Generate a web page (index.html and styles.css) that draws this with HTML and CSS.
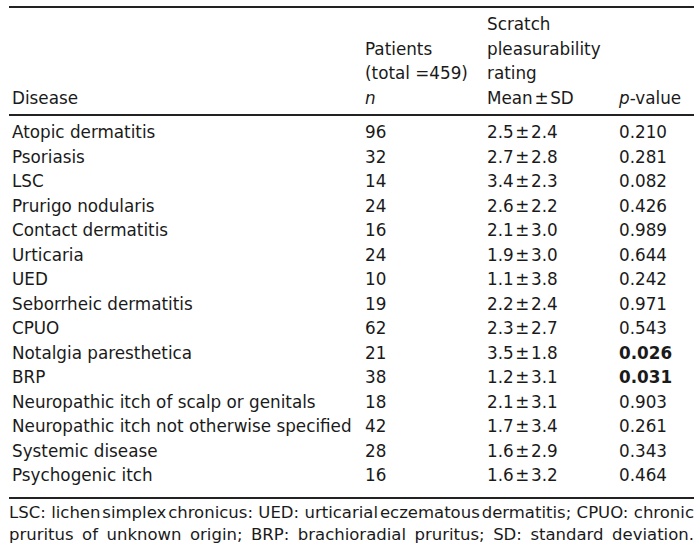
FILE: index.html
```html
<!DOCTYPE html>
<html>
<head>
<meta charset="utf-8">
<link rel="stylesheet" href="styles.css">
</head>
<body>
<div class="wrap">
<table class="tbl">
<colgroup>
<col class="c1"><col class="c2"><col class="c3"><col class="c4">
</colgroup>
<thead>
<tr>
<th>Disease</th>
<th>Patients<br>(total =459)<br><i>n</i></th>
<th>Scratch<br>pleasurability<br>rating<br>Mean&#8202;±&#8202;SD</th>
<th><i>p</i>-value</th>
</tr>
</thead>
<tbody>
<tr class="first"><td>Atopic dermatitis</td><td>96</td><td>2.5&#8202;±&#8202;2.4</td><td>0.210</td></tr>
<tr><td>Psoriasis</td><td>32</td><td>2.7&#8202;±&#8202;2.8</td><td>0.281</td></tr>
<tr><td>LSC</td><td>14</td><td>3.4&#8202;±&#8202;2.3</td><td>0.082</td></tr>
<tr><td>Prurigo nodularis</td><td>24</td><td>2.6&#8202;±&#8202;2.2</td><td>0.426</td></tr>
<tr><td>Contact dermatitis</td><td>16</td><td>2.1&#8202;±&#8202;3.0</td><td>0.989</td></tr>
<tr><td>Urticaria</td><td>24</td><td>1.9&#8202;±&#8202;3.0</td><td>0.644</td></tr>
<tr><td>UED</td><td>10</td><td>1.1&#8202;±&#8202;3.8</td><td>0.242</td></tr>
<tr><td>Seborrheic dermatitis</td><td>19</td><td>2.2&#8202;±&#8202;2.4</td><td>0.971</td></tr>
<tr><td>CPUO</td><td>62</td><td>2.3&#8202;±&#8202;2.7</td><td>0.543</td></tr>
<tr><td>Notalgia paresthetica</td><td>21</td><td>3.5&#8202;±&#8202;1.8</td><td><b>0.026</b></td></tr>
<tr><td>BRP</td><td>38</td><td>1.2&#8202;±&#8202;3.1</td><td><b>0.031</b></td></tr>
<tr><td>Neuropathic itch of scalp or genitals</td><td>18</td><td>2.1&#8202;±&#8202;3.1</td><td>0.903</td></tr>
<tr><td>Neuropathic itch not otherwise specified</td><td>42</td><td>1.7&#8202;±&#8202;3.4</td><td>0.261</td></tr>
<tr><td>Systemic disease</td><td>28</td><td>1.6&#8202;±&#8202;2.9</td><td>0.343</td></tr>
<tr class="last"><td>Psychogenic itch</td><td>16</td><td>1.6&#8202;±&#8202;3.2</td><td>0.464</td></tr>
</tbody>
</table>
<div class="foot">
<div class="fl fl1">LSC: <span class="tight">lichen simplex chronicus</span>: UED: <span class="tight">urticarial eczematous dermatitis</span>; CPUO: chronic</div>
<div class="fl fl2">pruritus of unknown origin; BRP: brachioradial pruritus; SD: standard deviation.</div>
</div>
</div>
</body>
</html>
```
FILE: styles.css
```css
html, body {
  margin: 0;
  padding: 0;
  background: #fff;
}
body {
  font-family: "DejaVu Sans", Verdana, sans-serif;
  color: #1a1a1a;
  font-size: 16.8px;
}
.wrap {
  width: 685px;
  margin-left: 9px;
  padding-top: 6px;
}
.tbl {
  width: 685px;
  border-collapse: collapse;
  table-layout: fixed;
  border-top: 2px solid #222;
  border-bottom: 2px solid #222;
}
.c1 { width: 353px; }
.c2 { width: 122px; }
.c3 { width: 132px; }
.c4 { width: 78px; }
th {
  font-weight: normal;
  text-align: left;
  vertical-align: bottom;
  line-height: 24.5px;
  padding: 4px 0 4px 3px;
  border-bottom: 2px solid #222;
  white-space: nowrap;
}
td {
  line-height: 24.5px;
  padding: 0 0 0 3px;
  white-space: nowrap;
}
tr.first td { padding-top: 4px; }
tr.last td { padding-bottom: 9px; }
.foot {
  padding-top: 3px;
}
.fl {
  line-height: 22.5px;
  text-align: justify;
  text-align-last: justify;
  white-space: nowrap;
  font-size: 16.5px;
}
.tight {
  word-spacing: -3.5px;
}
```
